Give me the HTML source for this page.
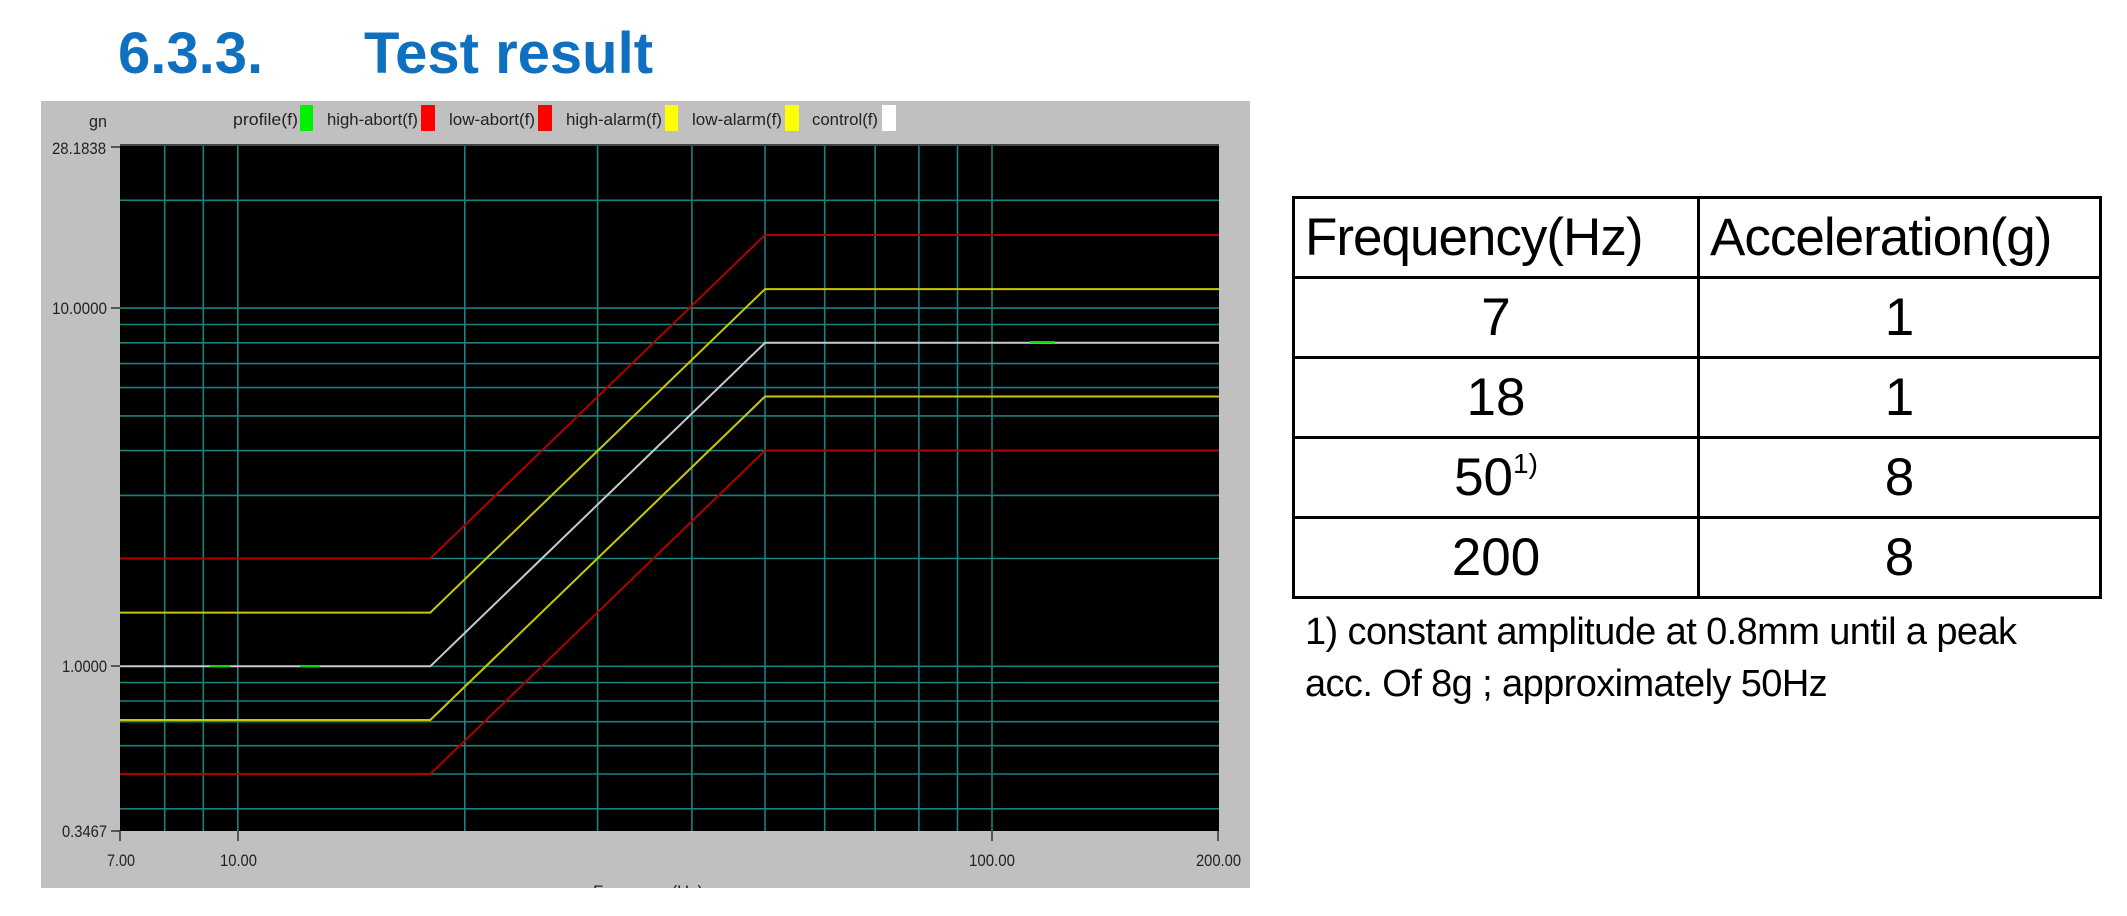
<!DOCTYPE html>
<html><head><meta charset="utf-8"><style>
body{margin:0;width:2127px;height:916px;background:#fff;position:relative;overflow:hidden;font-family:"Liberation Sans",sans-serif}
.t{position:absolute;font-weight:bold;color:#1070c0;font-size:58px;top:21px;line-height:66px}
.n{font-family:"Liberation Sans",sans-serif;font-size:17px;fill:#222}
table{position:absolute;left:1292px;top:196px;border-collapse:collapse;width:810px}
td{border:3px solid #000;height:77px;text-align:center;font-size:53px;padding:0;line-height:60px}
td.h{text-align:left;padding-left:10px;letter-spacing:-1px}
.f{position:absolute;left:1305px;top:606px;font-size:38px;line-height:52px;letter-spacing:-0.6px;color:#000}
</style></head><body>
<div class="t" style="left:118px">6.3.3.</div>
<div class="t" style="left:364px">Test result</div>
<svg style="position:absolute;left:0;top:0" width="1260" height="916">
<defs><clipPath id="c"><rect x="41" y="101" width="1209" height="787"/></clipPath></defs>
<rect x="41" y="101" width="1209" height="787" fill="#c0c0c0"/>
<rect x="120" y="145" width="1099" height="686" fill="#000"/>
<line x1="120" y1="145" x2="1219" y2="145" stroke="#444" stroke-width="2"/>
<g stroke="#1a8080" stroke-width="1.6">
<line x1="164.7" y1="146" x2="164.7" y2="831"/><line x1="203.3" y1="146" x2="203.3" y2="831"/><line x1="237.8" y1="146" x2="237.8" y2="831"/><line x1="464.8" y1="146" x2="464.8" y2="831"/><line x1="597.6" y1="146" x2="597.6" y2="831"/><line x1="691.9" y1="146" x2="691.9" y2="831"/><line x1="765" y1="146" x2="765" y2="831"/><line x1="824.7" y1="146" x2="824.7" y2="831"/><line x1="875.1" y1="146" x2="875.1" y2="831"/><line x1="918.9" y1="146" x2="918.9" y2="831"/><line x1="957.5" y1="146" x2="957.5" y2="831"/><line x1="992" y1="146" x2="992" y2="831"/>
<line x1="120" x2="1219" y1="808.8" y2="808.8"/><line x1="120" x2="1219" y1="774" y2="774"/><line x1="120" x2="1219" y1="745.7" y2="745.7"/><line x1="120" x2="1219" y1="721.7" y2="721.7"/><line x1="120" x2="1219" y1="701" y2="701"/><line x1="120" x2="1219" y1="682.6" y2="682.6"/><line x1="120" x2="1219" y1="666.3" y2="666.3"/><line x1="120" x2="1219" y1="558.5" y2="558.5"/><line x1="120" x2="1219" y1="495.4" y2="495.4"/><line x1="120" x2="1219" y1="450.6" y2="450.6"/><line x1="120" x2="1219" y1="415.9" y2="415.9"/><line x1="120" x2="1219" y1="387.6" y2="387.6"/><line x1="120" x2="1219" y1="363.6" y2="363.6"/><line x1="120" x2="1219" y1="342.8" y2="342.8"/><line x1="120" x2="1219" y1="324.5" y2="324.5"/><line x1="120" x2="1219" y1="308.1" y2="308.1"/><line x1="120" x2="1219" y1="200.3" y2="200.3"/>
</g>
<g fill="none" stroke-width="2">
<polyline stroke="#b00000" points="120,558.5 430.3,558.5 765,235 1219,235"/>
<polyline stroke="#b00000" points="120,774.1 430.3,774.1 765,450.6 1219,450.6"/>
<polyline stroke="#c8c800" points="120,612.6 430.3,612.6 765,289.1 1219,289.1"/>
<polyline stroke="#c8c800" points="120,720 430.3,720 765,396.5 1219,396.5"/>
<polyline stroke="#c8c8c8" points="120,666.3 430.3,666.3 765,342.8 1219,342.8"/>
</g>
<g stroke="#00e000" stroke-width="2"><line x1="1030" x2="1055" y1="342" y2="342"/><line x1="210" x2="230" y1="666" y2="666"/><line x1="300" x2="320" y1="666" y2="666"/></g>
<g stroke="#333" stroke-width="1.5"><line x1="111" x2="120" y1="147" y2="147"/><line x1="111" x2="120" y1="308" y2="308"/><line x1="111" x2="120" y1="666" y2="666"/><line x1="111" x2="120" y1="831" y2="831"/><line x1="120" x2="120" y1="831" y2="841"/><line x1="238" x2="238" y1="831" y2="841"/><line x1="992" x2="992" y1="831" y2="841"/><line x1="1218" x2="1218" y1="831" y2="841"/></g>
<g class="n" font-size="18">
<text x="89" y="127" textLength="18" lengthAdjust="spacingAndGlyphs">gn</text>
<text x="52" y="154" textLength="54" lengthAdjust="spacingAndGlyphs">28.1838</text>
<text x="52" y="314" textLength="55" lengthAdjust="spacingAndGlyphs">10.0000</text>
<text x="62" y="672" textLength="45" lengthAdjust="spacingAndGlyphs">1.0000</text>
<text x="62" y="837" textLength="45" lengthAdjust="spacingAndGlyphs">0.3467</text>
<text x="107" y="866" textLength="28" lengthAdjust="spacingAndGlyphs">7.00</text>
<text x="220" y="866" textLength="37" lengthAdjust="spacingAndGlyphs">10.00</text>
<text x="969" y="866" textLength="46" lengthAdjust="spacingAndGlyphs">100.00</text>
<text x="1196" y="866" textLength="45" lengthAdjust="spacingAndGlyphs">200.00</text>
<text x="593" y="897" textLength="110" lengthAdjust="spacingAndGlyphs" clip-path="url(#c)">Frequency(Hz)</text>
<text x="233" y="125" textLength="65" lengthAdjust="spacingAndGlyphs">profile(f)</text>
<text x="327" y="125" textLength="91" lengthAdjust="spacingAndGlyphs">high-abort(f)</text>
<text x="449" y="125" textLength="86" lengthAdjust="spacingAndGlyphs">low-abort(f)</text>
<text x="566" y="125" textLength="96" lengthAdjust="spacingAndGlyphs">high-alarm(f)</text>
<text x="692" y="125" textLength="90" lengthAdjust="spacingAndGlyphs">low-alarm(f)</text>
<text x="812" y="125" textLength="66" lengthAdjust="spacingAndGlyphs">control(f)</text>
</g>
<rect x="300" y="105" width="13" height="26" fill="#00f000"/><rect x="421" y="105" width="14" height="26" fill="#f00"/><rect x="538" y="105" width="14" height="26" fill="#f00"/><rect x="665" y="105" width="13" height="26" fill="#ff0"/><rect x="785" y="105" width="14" height="26" fill="#ff0"/><rect x="882" y="105" width="14" height="26" fill="#fff"/>
</svg>
<table>
<tr><td class="h" style="width:392px">Frequency(Hz)</td><td class="h">Acceleration(g)</td></tr>
<tr><td>7</td><td>1</td></tr>
<tr><td>18</td><td>1</td></tr>
<tr><td>50<sup style="font-size:28px;vertical-align:22px;line-height:0">1)</sup></td><td>8</td></tr>
<tr><td>200</td><td>8</td></tr>
</table>
<div class="f">1) constant amplitude at 0.8mm until a peak<br>acc. Of 8g ; approximately 50Hz</div>
</body></html>
